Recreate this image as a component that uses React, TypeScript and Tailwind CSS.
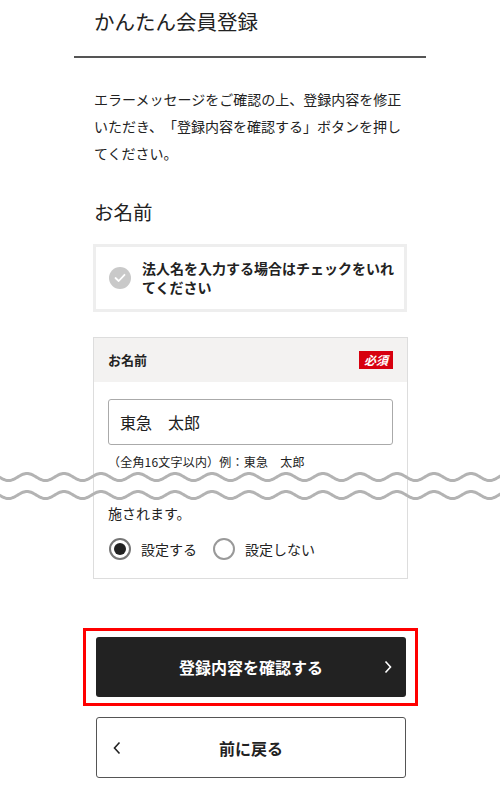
import React from "react";

const FONT = { fontFamily: '"Noto Sans CJK JP", "Noto Sans", sans-serif' };

function wavePath(y: number, width: number, period: number, amp: number, phase: number) {
  const pts: string[] = [];
  for (let x = -2; x <= width + 2; x += 1) {
    const yy = y - amp * Math.sin(((x - phase) / period) * 2 * Math.PI + Math.PI / 2);
    pts.push(`${x === -2 ? "M" : "L"}${x} ${yy.toFixed(2)}`);
  }
  return pts.join(" ");
}

function Wave() {
  return (
    <div className="relative h-[32px]">
      <svg
        className="absolute top-0 left-[-108px]"
        width="500"
        height="32"
        viewBox="0 0 500 32"
      >
        <path d={wavePath(6, 500, 37, 3.5, 27)} fill="none" stroke="#b3b3b3" strokeWidth="3" />
        <path d={wavePath(24, 500, 37, 3.5, 27)} fill="none" stroke="#b3b3b3" strokeWidth="3" />
      </svg>
    </div>
  );
}

export default function App() {
  return (
    <div className="w-[500px] h-[800px] bg-white overflow-hidden text-[#222] [text-spacing-trim:space-all]" style={FONT}>
      <div className="w-[352px] mx-auto">
        <h1 className="pt-[5px] px-[20px] text-[20.5px] leading-[32px] font-normal">かんたん会員登録</h1>
        <div className="mt-[19px] h-[2px] bg-[#555]" />
        <p className="mt-[28px] px-[20px] text-[14px] leading-[27px]">
          エラーメッセージをご確認の上、登録内容を修正いただき、「登録内容を確認する」ボタンを押してください。
        </p>
        <h2 className="mt-[31px] px-[20px] text-[19.5px] leading-[28px] font-normal">お名前</h2>

        <div className="mx-[19px] mt-[18px] border-[3px] border-[#eeeeee] h-[68px] flex items-center pl-[13px] pr-[4px] gap-[11px]">
          <div className="w-[22px] h-[22px] rounded-full bg-[#c9c9c9] flex items-center justify-center shrink-0">
            <svg width="12" height="10" viewBox="0 0 12 10">
              <path d="M1.5 5 L4.7 8 L10.5 1.8" fill="none" stroke="#fff" strokeWidth="1.8" strokeLinecap="round" strokeLinejoin="round" />
            </svg>
          </div>
          <div className="text-[14px] leading-[19px] font-bold">法人名を入力する場合はチェックをいれてください</div>
        </div>

        <div className="ml-[19px] mr-[18px] mt-[25px] border border-[#dddddd]">
          <div className="h-[44px] bg-[#f3f2f1] flex items-center justify-between px-[14px]">
            <span className="text-[13px] font-bold">お名前</span>
            <span className="bg-[#d7000f] text-white text-[12px] font-bold italic leading-[18px] w-[34px] text-center">必須</span>
          </div>
          <div className="px-[14px] pt-[17px] pb-[17px]">
            <div className="h-[46px] border border-[#aaaaaa] rounded-[3px] flex items-center px-[11px] text-[16px]">
              東急　太郎
            </div>
            <div className="mt-[8px] text-[12px] leading-[18px] tracking-[0.2px]">（全角16文字以内）例：東急　太郎</div>
            <Wave />
            <div className="text-[14px] leading-[20px]">施されます。</div>
            <div className="mt-[14px] flex items-center h-[24px] text-[14px]">
              <div className="w-[22px] h-[22px] rounded-full border-2 border-[#777] flex items-center justify-center ml-[1px]">
                <div className="w-[12px] h-[12px] rounded-full bg-[#222]" />
              </div>
              <span className="ml-[10px]">設定する</span>
              <div className="w-[22px] h-[22px] rounded-full border-2 border-[#999] ml-[16px]" />
              <span className="ml-[10px]">設定しない</span>
            </div>
          </div>
        </div>

        <div className="ml-[9px] mr-[8px] mt-[49px] border-[3px] border-[#ff0000] pt-[6px] pb-[6px] pl-[10px] pr-[9px]">
          <div className="relative h-[60px] bg-[#222] rounded-[3px] flex items-center justify-center text-white text-[16px] font-bold">
            登録内容を確認する
            <svg className="absolute right-[14px] top-[23px]" width="8" height="14" viewBox="0 0 8 14">
              <path d="M1.5 1.5 L6.5 7 L1.5 12.5" fill="none" stroke="#fff" strokeWidth="1.6" />
            </svg>
          </div>
        </div>

        <div className="relative ml-[22px] mr-[20px] mt-[11px] h-[61px] border border-[#555] rounded-[3px] flex items-center justify-center text-[16px] font-bold">
          前に戻る
          <svg className="absolute left-[16px] top-[23px]" width="8" height="14" viewBox="0 0 8 14">
            <path d="M6.5 1.5 L1.5 7 L6.5 12.5" fill="none" stroke="#222" strokeWidth="1.6" />
          </svg>
        </div>
      </div>
    </div>
  );
}
